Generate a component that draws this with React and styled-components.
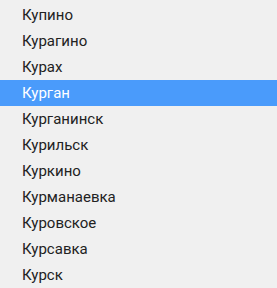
import React from 'react';
import styled, {createGlobalStyle} from 'styled-components';

const GlobalStyle = createGlobalStyle`
  html, body {
    margin: 0;
    padding: 0;
    background: #f0f0f0;
  }
`;

const List = styled.ul`
  list-style: none;
  margin: 0;
  padding: 2px 0 0;
  width: 277px;
  height: 288px;
  overflow: hidden;
  background: #f0f0f0;
  font-family: Roboto, "Liberation Sans", sans-serif;
  font-size: 15px;
`;

const Item = styled.li`
  height: 26px;
  line-height: 26px;
  padding-left: 22px;
  color: ${p => (p.$active ? '#ffffff' : '#222222')};
  background: ${p => (p.$active ? '#4a9bfb' : 'transparent')};
  white-space: nowrap;
`;

const cities = [
    'Купино',
    'Курагино',
    'Курах',
    'Курган',
    'Курганинск',
    'Курильск',
    'Куркино',
    'Курманаевка',
    'Куровское',
    'Курсавка',
    'Курск',
];

export default function App() {
    const selected = 'Курган';
    return (
        <>
            <GlobalStyle/>
            <List>
                {cities.map(name => (
                    <Item key={name} $active={name === selected}>{name}</Item>
                ))}
            </List>
        </>
    );
}
